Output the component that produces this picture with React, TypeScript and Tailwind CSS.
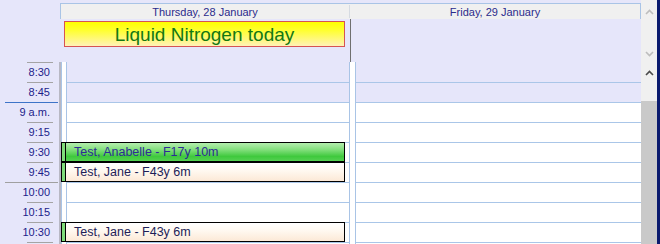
import React from "react";

const rows = ["8:30", "8:45", "9 a.m.", "9:15", "9:30", "9:45", "10:00", "10:15", "10:30", ""];
const hourRows: Record<number, string> = { 2: "bg-[#3d74c8]", 6: "bg-[#a0a0a0]" };

function Chevron({ up, color }: { up: boolean; color: string }) {
  return (
    <svg width="9" height="6" viewBox="0 0 9 6" className="block">
      <polyline
        points={up ? "1,5 4.5,1.5 8,5" : "1,1 4.5,4.5 8,1"}
        fill="none"
        stroke={color}
        strokeWidth="1.6"
      />
    </svg>
  );
}

function Appt({ top, text, green }: { top: number; text: string; green?: boolean }) {
  return (
    <div className="absolute left-0 w-[284px] h-[20px] flex" style={{ top }}>
      <div className="w-[5px] h-full border border-black bg-[#7fdc7a]" />
      <div
        className={
          "flex-1 h-full border border-l-0 border-black flex items-center pl-[8px] text-[12.5px] " +
          (green
            ? "bg-[linear-gradient(to_bottom,#b4eeae_0%,#86e080_35%,#3fc93d_75%,#55d052_100%)] text-[#2c2c96]"
            : "bg-[linear-gradient(to_bottom,#ffffff_0%,#fff8ef_45%,#fce9d6_100%)] text-[#1e1e58]")
        }
      >
        {text}
      </div>
    </div>
  );
}

export default function App() {
  return (
    <div
      className="w-[660px] h-[244px] overflow-hidden flex bg-[#e6e6fa]"
      style={{ fontFamily: '"Liberation Sans", Arial, sans-serif' }}
    >
      <div className="w-[641px] flex flex-col">
        {/* top */}
        <div className="h-[62px] flex">
          <div className="w-[60px]" />
          <div className="w-[581px] flex flex-col">
            <div className="mt-[3px] h-[16px] flex bg-[#f0f0f0] border-t border-l border-r border-[#a9c4e6] text-[11px] text-[#2b2b8c] leading-none">
              <div className="w-[288px] flex items-center justify-center pt-px">Thursday, 28 January</div>
              <div className="w-px my-[1px] bg-[#d6dbe2]" />
              <div className="flex-1 flex items-center justify-center pt-px">Friday, 29 January</div>
            </div>
            <div className="h-[43px] flex">
              <div className="w-[290px]">
                <div className="ml-[4px] mt-[2px] w-[281px] h-[26px] border border-[#d65353] bg-[linear-gradient(to_bottom,#ffff00_0%,#ffff30_35%,#fff2b8_100%)] flex items-center justify-center text-[19px] text-[#137813] leading-none">
                  Liquid Nitrogen today
                </div>
              </div>
              <div className="flex-1 border-l border-[#6f6f6f]" />
            </div>
          </div>
        </div>

        {/* body */}
        <div className="flex-1 flex">
          {/* time column */}
          <div className="w-[61px] flex flex-col border-r-2 border-[#b8b8c4]">
            {rows.map((r, i) => (
              <div key={i} className="h-[20px] flex flex-col shrink-0">
                {hourRows[i] ? (
                  <div className={"ml-[5px] w-[53px] h-px " + hourRows[i]} />
                ) : (
                  <div className="ml-[27px] w-[26px] h-px bg-[#a4a4a4]" />
                )}
                <div className="flex-1 flex items-center justify-end pr-[9px] text-[11px] text-[#1c1c8a] leading-none">
                  {r}
                </div>
              </div>
            ))}
          </div>

          {/* day 1 */}
          <div className="w-[288px] flex relative">
            <div className="w-[6px] bg-white border-l border-r border-[#a9c4e6]" />
            <div className="flex-1 flex flex-col">
              {rows.map((r, i) => (
                <div
                  key={i}
                  className={
                    "h-[20px] shrink-0 " +
                    (i > 0 ? "border-t border-[#aac6e8] " : "") +
                    (i < 2 ? "bg-[#e6e6fa]" : "bg-white")
                  }
                />
              ))}
            </div>
            <Appt top={80} text="Test, Anabelle - F17y 10m" green />
            <Appt top={100} text="Test, Jane - F43y 6m" />
            <Appt top={160} text="Test, Jane - F43y 6m" />
          </div>

          {/* day 2 */}
          <div className="flex-1 flex">
            <div className="w-[7px] bg-white border-l border-r border-[#a9c4e6]" />
            <div className="flex-1 flex flex-col">
              {rows.map((r, i) => (
                <div
                  key={i}
                  className={
                    "h-[20px] shrink-0 " +
                    (i > 0 ? "border-t border-[#aac6e8] " : "") +
                    (i < 2 ? "bg-[#e6e6fa]" : "bg-white")
                  }
                />
              ))}
            </div>
          </div>
        </div>
      </div>

      {/* scrollbar */}
      <div className="w-[16px] flex flex-col bg-[#f0f0f0]">
        <div className="h-[62px] flex flex-col items-center justify-between pt-[9px] pb-[5px]">
          <Chevron up color="#bdbdbd" />
          <Chevron up={false} color="#bdbdbd" />
        </div>
        <div className="h-[39px] flex justify-center pt-[8px]">
          <Chevron up color="#4a4a4a" />
        </div>
        <div className="flex-1 bg-[#c9c9c9]" />
      </div>
      <div className="w-[3px] bg-[#0a1a6e]" />
    </div>
  );
}
